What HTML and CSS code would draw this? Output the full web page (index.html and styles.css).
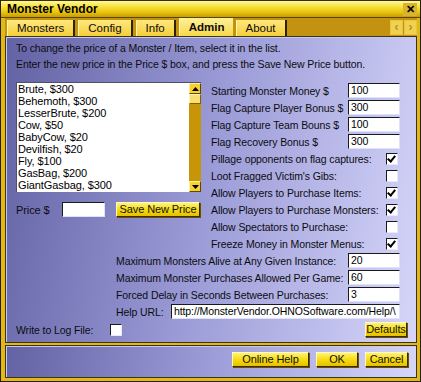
FILE: index.html
```html
<!DOCTYPE html>
<html lang="en">
<head>
    <meta charset="UTF-8">
    <title>Monster Vendor</title>
    <link rel="stylesheet" href="styles.css">
</head>
<body>
    <div class="window">
        <div class="titlebar">
            <span class="title">Monster Vendor</span>
            <span class="close">&#x2715;</span>
        </div>

        <div class="tabbar">
            <div class="tab">Monsters</div>
            <div class="tab">Config</div>
            <div class="tab">Info</div>
            <div class="tab active">Admin</div>
            <div class="tab">About</div>
            <div class="tab-arrows">
                <span class="tab-arrow">&#x2039;</span>
                <span class="tab-arrow">&#x203A;</span>
            </div>
        </div>

        <div class="panel">
            <p class="intro">
                To change the price of a Monster / Item, select it in the list.<br>
                Enter the new price in the Price $ box, and press the Save New Price button.
            </p>

            <div class="columns">
                <div class="left">
                    <div class="listbox">
                        <ul class="items">
                            <li>Brute, $300</li>
                            <li>Behemoth, $300</li>
                            <li>LesserBrute, $200</li>
                            <li>Cow, $50</li>
                            <li>BabyCow, $20</li>
                            <li>Devilfish, $20</li>
                            <li>Fly, $100</li>
                            <li>GasBag, $200</li>
                            <li>GiantGasbag, $300</li>
                            <li>Krall, $200</li>
                        </ul>
                        <div class="scrollbar">
                            <span class="sb-btn">
                                <svg width="7" height="4" viewBox="0 0 7 4"><path d="M0 4 L3.5 0 L7 4 Z" fill="#000"/></svg>
                            </span>
                            <span class="sb-thumb"></span>
                            <span class="sb-track"></span>
                            <span class="sb-btn">
                                <svg width="7" height="4" viewBox="0 0 7 4"><path d="M0 0 L3.5 4 L7 0 Z" fill="#000"/></svg>
                            </span>
                        </div>
                    </div>
                    <div class="price-row">
                        <span class="price-label">Price $</span>
                        <span class="field price-field"></span>
                        <span class="btn save-btn">Save New Price</span>
                    </div>
                </div>

                <div class="right">
                    <div class="row"><span>Starting Monster Money $</span><span class="field">100</span></div>
                    <div class="row"><span>Flag Capture Player Bonus $</span><span class="field">300</span></div>
                    <div class="row"><span>Flag Capture Team Bouns $</span><span class="field">100</span></div>
                    <div class="row"><span>Flag Recovery Bonus $</span><span class="field">300</span></div>
                    <div class="row"><span>Pillage opponents on flag captures:</span><span class="check on"></span></div>
                    <div class="row"><span>Loot Fragged Victim's Gibs:</span><span class="check"></span></div>
                    <div class="row"><span>Allow Players to Purchase Items:</span><span class="check on"></span></div>
                    <div class="row"><span>Allow Players to Purchase Monsters:</span><span class="check on"></span></div>
                    <div class="row"><span>Allow Spectators to Purchase:</span><span class="check"></span></div>
                    <div class="row"><span>Freeze Money in Monster Menus:</span><span class="check on"></span></div>
                </div>
            </div>

            <div class="long-rows">
                <div class="row"><span>Maximum Monsters Alive at Any Given Instance:</span><span class="field">20</span></div>
                <div class="row"><span>Maximum Monster Purchases Allowed Per Game:</span><span class="field">60</span></div>
                <div class="row"><span>Forced Delay in Seconds Between Purchases:</span><span class="field">3</span></div>
                <div class="row url-row"><span>Help URL:</span><span class="field url-field">http://MonsterVendor.OHNOSoftware.com/Help/\</span></div>
            </div>

            <div class="log-row">
                <span class="log-label">Write to Log File:</span>
                <span class="check"></span>
                <span class="btn defaults-btn">Defaults</span>
            </div>
        </div>

        <div class="footer">
            <span class="btn help-btn">Online Help</span>
            <span class="btn ok-btn">OK</span>
            <span class="btn cancel-btn">Cancel</span>
        </div>
    </div>
</body>
</html>
```

FILE: styles.css
```css
body {
    margin: 0;
    font-family: 'Liberation Sans', Arial, sans-serif;
    font-size: 10.5px;
    letter-spacing: -0.1px;
    color: #0c0c10;
}

.window {
    width: 421px;
    height: 382px;
    box-sizing: border-box;
    background: #e2b818;
    border: 1px solid #262000;
    border-top: none;
    padding: 0 3px 3px 4px;
    display: flex;
    flex-direction: column;
}

/* title bar */
.titlebar {
    height: 18px;
    margin: 0 -3px 0 -4px;
    padding: 0 3px 0 6px;
    display: flex;
    align-items: center;
    justify-content: space-between;
    background: linear-gradient(#fff7a0, #f8e23a 35%, #e8c410 70%, #c89c00);
    border-top: 1px solid #3a3000;
    border-bottom: 1px solid #5a4600;
    box-sizing: border-box;
}

.title {
    font-weight: bold;
    font-size: 12px;
    letter-spacing: 0;
    color: #000;
}

.close {
    width: 14px;
    height: 13px;
    line-height: 13px;
    text-align: center;
    font-size: 11px;
    font-weight: bold;
    color: #000;
    background: #d8b430;
}

/* tabs */
.tabbar {
    height: 18px;
    background: #c29210;
    display: flex;
    align-items: flex-end;
    padding: 0 0 0 2px;
    gap: 3px;
}

.tab {
    height: 16px;
    line-height: 16px;
    padding: 0 9px 0 9px;
    background: linear-gradient(#fde780, #f6cf38);
    border-left: 1px solid #fff4b0;
    border-right: 2px solid #2c2200;
    font-size: 11.5px;
    letter-spacing: 0;
}

.tab.active {
    height: 18px;
    line-height: 18px;
    font-weight: bold;
    background: linear-gradient(#fff09a, #f8d84a);
    border-right: none;
    padding-right: 8px;
}

.tab-arrows {
    margin-left: auto;
    align-self: center;
    display: flex;
    gap: 1px;
}

.tab-arrow {
    width: 11px;
    height: 13px;
    line-height: 12px;
    text-align: center;
    font-size: 12px;
    font-weight: bold;
    color: #b89020;
    background: #f0d050;
    border: 1px solid #e8c440;
}

/* main panel */
.panel {
    height: 307px;
    box-sizing: border-box;
    background: linear-gradient(100deg, #6262a4 0%, #9c9cd8 50%, #d6d6fa 100%);
    border: 1px solid #3c3418;
    box-shadow: inset 1px 1px 0 #c8c8ee;
    padding: 3px 0 0 10px;
}

.intro {
    margin: 0;
    line-height: 16px;
}

.columns {
    display: flex;
    gap: 10px;
    margin-top: 10px;
}

.left {
    width: 185px;
}

.listbox {
    height: 110px;
    display: flex;
    background: #fff;
    border-top: 1px solid #50506a;
    border-left: 1px solid #50506a;
    box-sizing: border-box;
}

.items {
    flex: 1;
    margin: 0;
    padding: 0 0 0 1px;
    list-style: none;
    overflow: hidden;
    color: #000;
    font-size: 11px;
}

.items li {
    height: 12px;
    line-height: 12px;
}

.scrollbar {
    width: 12px;
    display: flex;
    flex-direction: column;
    background: #c69608;
}

.sb-btn {
    height: 11px;
    display: flex;
    align-items: center;
    justify-content: center;
    background: #f8d030;
    border: 1px solid;
    border-color: #fff0a0 #604800 #604800 #fff0a0;
    box-sizing: border-box;
}

.sb-thumb {
    height: 10px;
    background: #f8e070;
    border: 1px solid;
    border-color: #fff4b8 #806010 #806010 #fff4b8;
    box-sizing: border-box;
}

.sb-track {
    flex: 1;
}

.price-row {
    display: flex;
    align-items: center;
    margin-top: 10px;
    height: 15px;
}

.price-label {
    width: 46px;
    font-size: 11px;
}

/* fields and controls */
.field {
    width: 52px;
    height: 15px;
    line-height: 13px;
    box-sizing: border-box;
    background: #fff;
    border-top: 1px solid #1a1a1a;
    border-left: 1px solid #1a1a1a;
    border-right: 1px solid #e0e0ff;
    border-bottom: 1px solid #e0e0ff;
    padding-left: 2px;
    color: #000;
    white-space: nowrap;
    overflow: hidden;
}

.price-field {
    width: 43px;
}

.btn {
    height: 15px;
    line-height: 13px;
    box-sizing: border-box;
    text-align: center;
    white-space: nowrap;
    background: linear-gradient(#fff27a, #f6dc10 50%, #e6c000);
    border: 1px solid;
    border-color: #fff8c0 #3a2c00 #3a2c00 #fff8c0;
    box-shadow: 1px 1px 0 #6a5000;
    color: #101010;
    font-size: 11px;
}

.save-btn {
    width: 84px;
    margin-left: 11px;
}

.right {
    width: 189px;
}

.row {
    height: 17px;
    display: flex;
    align-items: center;
    justify-content: space-between;
    white-space: nowrap;
}

.check {
    width: 12px;
    height: 12px;
    box-sizing: border-box;
    margin-right: 2px;
    background: #fff;
    border-top: 1px solid #1a1a1a;
    border-left: 1px solid #1a1a1a;
    border-right: 1px solid #e8e8ff;
    border-bottom: 1px solid #e8e8ff;
    position: relative;
}

.check.on::after {
    content: "";
    position: absolute;
    left: 2px;
    top: 0px;
    width: 3px;
    height: 6px;
    border-right: 2px solid #000;
    border-bottom: 2px solid #000;
    transform: rotate(40deg);
}

.long-rows {
    width: 284px;
    margin-left: 100px;
}

.url-field {
    width: 229px;
}

.log-row {
    display: flex;
    align-items: center;
    height: 17px;
    margin-top: 1px;
}

.log-label {
    width: 94px;
}

.defaults-btn {
    width: 42px;
    margin-left: auto;
    margin-right: 9px;
}

/* footer */
.footer {
    flex: 1;
    margin-top: 2px;
    background: linear-gradient(100deg, #6262a4 0%, #9c9cd8 50%, #d6d6fa 100%);
    border: 1px solid #3c3418;
    box-shadow: inset 1px 1px 0 #c8c8ee;
    display: flex;
    justify-content: flex-end;
    align-items: center;
    gap: 7px;
    padding: 0 8px 4px 0;
}

.help-btn {
    width: 77px;
}

.ok-btn {
    width: 42px;
}

.cancel-btn {
    width: 43px;
}
```
